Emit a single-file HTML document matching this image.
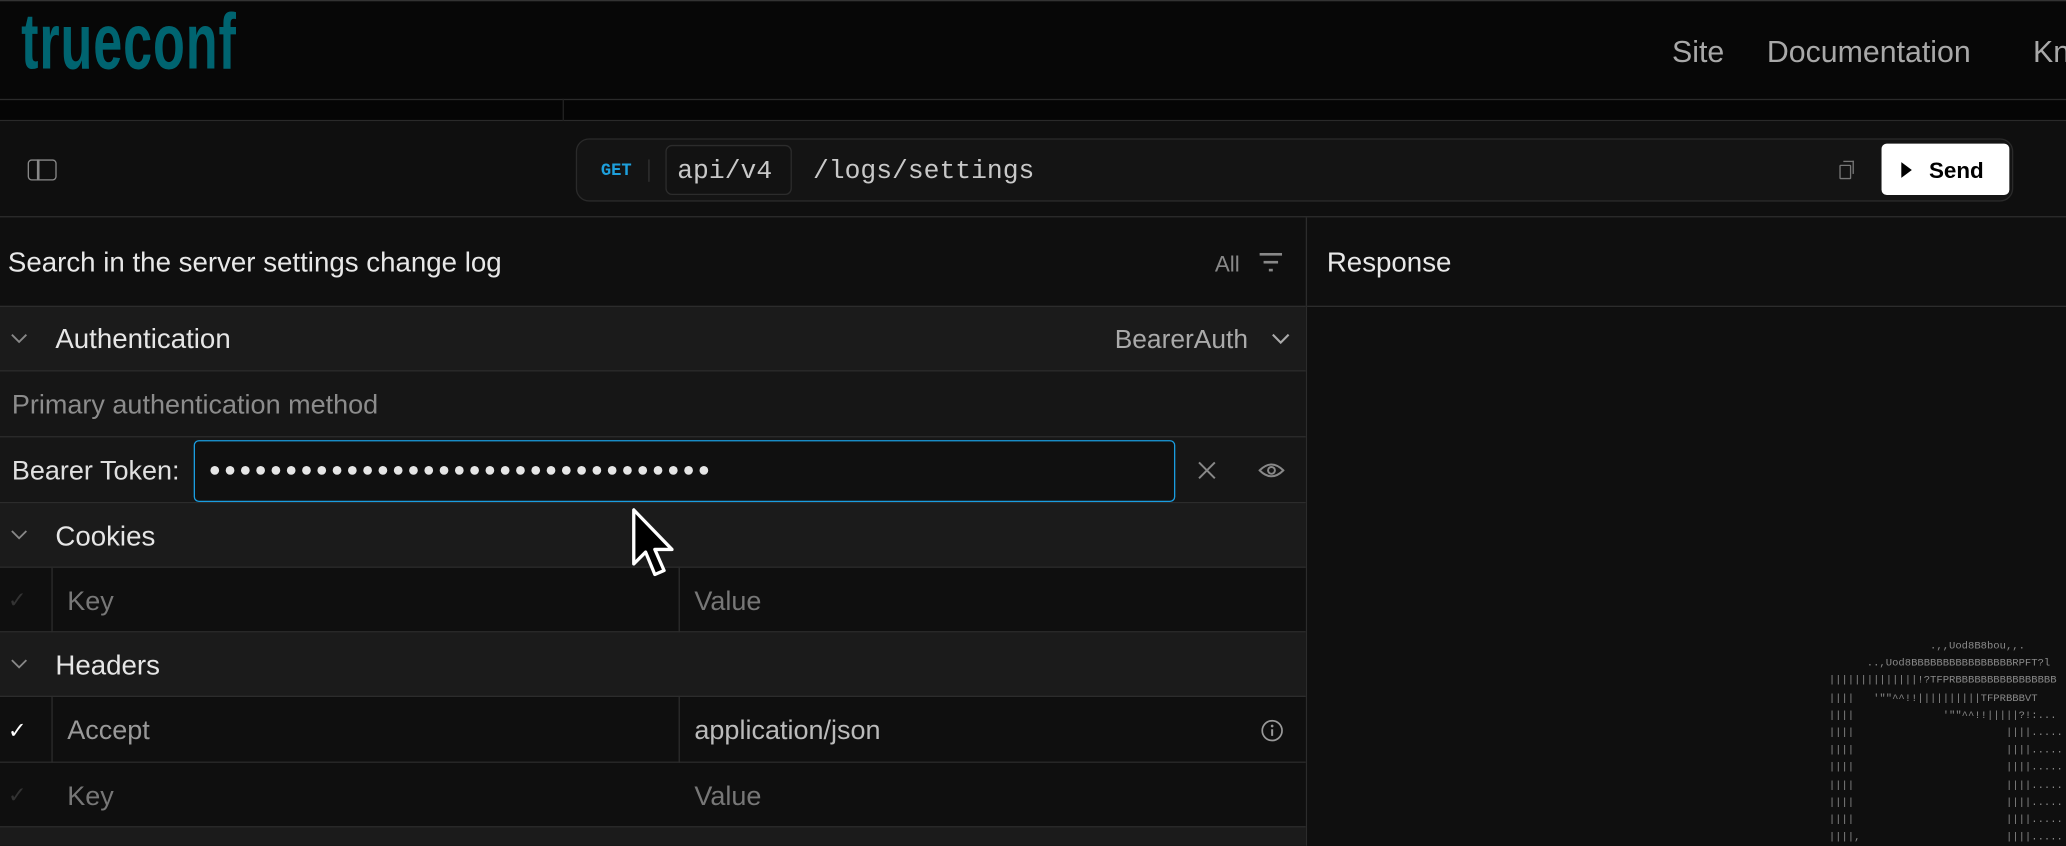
<!DOCTYPE html>
<html><head><meta charset="utf-8"><style>
html,body{margin:0;padding:0;background:#0f0f0f;overflow:hidden;width:2066px;height:846px}
#w{position:absolute;left:0;top:0;width:1568px;height:642px;transform:scale(1.317602);transform-origin:0 0;font-family:"Liberation Sans",sans-serif;color:#e6e6e6;background:#0f0f0f;overflow:hidden}
.a{position:absolute}
.hdr{left:0;top:0;width:1568px;height:75px;background:#070707;border-top:1px solid #333;box-sizing:border-box}
.row{position:absolute;left:0;width:991px;border-bottom:1px solid #2c2c2c;box-sizing:border-box}
.sec{background:#1b1b1b}
.t{position:absolute;white-space:nowrap}
.mono{font-family:"Liberation Mono",monospace}
pre{margin:0;font-family:"Liberation Mono",monospace;font-size:8px;line-height:13.2px;color:#8a8a8a}
</style></head><body><div id="w">
<div class="a hdr"></div>
<div class="t" style="left:16px;top:-3px;font-family:'Liberation Sans Narrow','Liberation Sans',sans-serif;font-weight:bold;font-size:60px;color:#006470;transform:scaleX(0.66);transform-origin:0 0;letter-spacing:1px">trueconf</div>
<div class="t" style="left:1269px;top:26px;font-size:23px;color:#a8a8a8">Site</div>
<div class="t" style="left:1341px;top:26px;font-size:23px;color:#a8a8a8">Documentation</div>
<div class="t" style="left:1543px;top:26px;font-size:23px;color:#a8a8a8">Kn</div>
<div class="a" style="left:0;top:75px;width:1568px;height:17px;background:#050505;border-top:1px solid #2a2a2a;border-bottom:1px solid #2a2a2a;box-sizing:border-box"></div>
<div class="a" style="left:427px;top:75px;width:1px;height:17px;background:#222"></div>
<!-- toolbar -->
<div class="a" style="left:0;top:92px;width:1568px;height:73px;background:#0f0f0f;border-bottom:1px solid #2c2c2c;box-sizing:border-box"></div>
<div class="a" style="left:21px;top:121px;width:22px;height:16px;border:1.5px solid #888;border-radius:3px;box-sizing:border-box"></div>
<div class="a" style="left:28px;top:121px;width:1.5px;height:16px;background:#888"></div>
<div class="a" style="left:437px;top:105px;width:1091px;height:48px;background:#141414;border:1px solid #2a2a2a;border-radius:10px;box-sizing:border-box"></div>
<div class="t mono" style="left:456px;top:122px;font-size:13px;font-weight:bold;color:#1ea0dc">GET</div>
<div class="a" style="left:492px;top:121px;width:1px;height:17px;background:#333"></div>
<div class="a" style="left:505px;top:110px;width:96px;height:38px;border:1px solid #2c2c2c;border-radius:5px;box-sizing:border-box;background:#121212"></div>
<div class="t mono" style="left:514px;top:119px;font-size:20px;color:#c8c8c8">api/v4</div>
<div class="t mono" style="left:617px;top:119px;font-size:20px;color:#c8c8c8">/logs/settings</div>
<div class="a" style="left:1396px;top:125px;width:7px;height:9px;border:1.2px solid #777;border-radius:1px"></div>
<div class="a" style="left:1399px;top:122px;width:7px;height:9px;border-top:1.2px solid #777;border-right:1.2px solid #777"></div>
<div class="a" style="left:1428px;top:109px;width:97px;height:39px;background:#fff;border-radius:4px"></div>
<svg class="a" style="left:1442px;top:123px" width="10" height="12"><path d="M1 0 L9 6 L1 12Z" fill="#000"/></svg>
<div class="t" style="left:1464px;top:120px;font-size:17px;font-weight:bold;color:#000">Send</div>
<!-- left panel -->
<div class="a" style="left:991px;top:165px;width:1px;height:477px;background:#2c2c2c"></div>
<div class="row" style="top:165px;height:68px"></div>
<div class="t" style="left:6px;top:188px;font-size:21px;color:#e8e8e8">Search in the server settings change log</div>
<div class="t" style="left:922px;top:191px;font-size:17px;color:#888">All</div>
<div class="a" style="left:956px;top:192px;width:17px;height:2px;background:#888"></div>
<div class="a" style="left:959px;top:198px;width:11px;height:2px;background:#888"></div>
<div class="a" style="left:963px;top:204px;width:3px;height:2px;background:#888"></div>
<div class="t" style="left:1007px;top:188px;font-size:21px;color:#e8e8e8">Response</div>
<div class="a" style="left:992px;top:232px;width:576px;height:1px;background:#2c2c2c"></div>

<div class="row sec" style="top:233px;height:49px"></div>
<svg class="a" style="left:8px;top:253px" width="13" height="8"><path d="M1 1 L6.5 6.5 L12 1" stroke="#888" stroke-width="1.4" fill="none"/></svg>
<div class="t" style="left:42px;top:246px;font-size:21px">Authentication</div>
<div class="t" style="left:846px;top:247px;font-size:20px;color:#aaa">BearerAuth</div>
<svg class="a" style="left:965px;top:253px" width="14" height="9"><path d="M1 1 L7 7 L13 1" stroke="#aaa" stroke-width="1.6" fill="none"/></svg>
<div class="row" style="top:282px;height:50px;background:#161616"></div>
<div class="t" style="left:9px;top:296px;font-size:20.5px;color:#8c8c8c">Primary authentication method</div>
<div class="row" style="top:332px;height:50px;background:#161616"></div>
<div class="t" style="left:9px;top:346px;font-size:20.5px;color:#e0e0e0">Bearer Token:</div>
<div class="a" style="left:147px;top:334px;width:745px;height:47px;border:1.5px solid #1a9de0;border-radius:4px;background:#101010;box-sizing:border-box"></div>
<svg class="a" style="left:158px;top:352px" width="390" height="10">
<g fill="#e6e6e6">
<circle cx="5" cy="5" r="3.3"/><circle cx="16.6" cy="5" r="3.3"/><circle cx="28.2" cy="5" r="3.3"/><circle cx="39.8" cy="5" r="3.3"/><circle cx="51.4" cy="5" r="3.3"/><circle cx="63" cy="5" r="3.3"/><circle cx="74.6" cy="5" r="3.3"/><circle cx="86.2" cy="5" r="3.3"/><circle cx="97.8" cy="5" r="3.3"/><circle cx="109.4" cy="5" r="3.3"/><circle cx="121" cy="5" r="3.3"/><circle cx="132.6" cy="5" r="3.3"/><circle cx="144.2" cy="5" r="3.3"/><circle cx="155.8" cy="5" r="3.3"/><circle cx="167.4" cy="5" r="3.3"/><circle cx="179" cy="5" r="3.3"/><circle cx="190.6" cy="5" r="3.3"/><circle cx="202.2" cy="5" r="3.3"/><circle cx="213.8" cy="5" r="3.3"/><circle cx="225.4" cy="5" r="3.3"/><circle cx="237" cy="5" r="3.3"/><circle cx="248.6" cy="5" r="3.3"/><circle cx="260.2" cy="5" r="3.3"/><circle cx="271.8" cy="5" r="3.3"/><circle cx="283.4" cy="5" r="3.3"/><circle cx="295" cy="5" r="3.3"/><circle cx="306.6" cy="5" r="3.3"/><circle cx="318.2" cy="5" r="3.3"/><circle cx="329.8" cy="5" r="3.3"/><circle cx="341.4" cy="5" r="3.3"/><circle cx="353" cy="5" r="3.3"/><circle cx="364.6" cy="5" r="3.3"/><circle cx="376.2" cy="5" r="3.3"/>
</g></svg>
<svg class="a" style="left:909px;top:350px" width="14" height="14"><path d="M1 1L13 13M13 1L1 13" stroke="#888" stroke-width="1.5"/></svg>
<svg class="a" style="left:955px;top:350px" width="20" height="14"><path d="M1 7Q10 -2 19 7Q10 16 1 7Z" stroke="#888" stroke-width="1.5" fill="none"/><circle cx="10" cy="7" r="2.6" stroke="#888" stroke-width="1.5" fill="none"/></svg>

<div class="row sec" style="top:382px;height:49px"></div>
<svg class="a" style="left:8px;top:402px" width="13" height="8"><path d="M1 1 L6.5 6.5 L12 1" stroke="#888" stroke-width="1.4" fill="none"/></svg>
<div class="t" style="left:42px;top:396px;font-size:21px">Cookies</div>
<div class="row" style="top:431px;height:49px;background:#0f0f0f"></div>
<div class="a" style="left:39px;top:431px;width:1px;height:49px;background:#2c2c2c"></div>
<div class="a" style="left:515px;top:431px;width:1px;height:49px;background:#2c2c2c"></div>
<div class="t" style="left:6px;top:446px;font-size:17px;color:#333">✓</div>
<div class="t" style="left:51px;top:445px;font-size:20.5px;color:#777">Key</div>
<div class="t" style="left:527px;top:445px;font-size:20.5px;color:#777">Value</div>

<div class="row sec" style="top:480px;height:49px"></div>
<svg class="a" style="left:8px;top:500px" width="13" height="8"><path d="M1 1 L6.5 6.5 L12 1" stroke="#888" stroke-width="1.4" fill="none"/></svg>
<div class="t" style="left:42px;top:494px;font-size:21px">Headers</div>
<div class="row" style="top:529px;height:50px;background:#0f0f0f"></div>
<div class="a" style="left:39px;top:529px;width:1px;height:99px;background:#2c2c2c"></div>
<div class="a" style="left:515px;top:529px;width:1px;height:99px;background:#2c2c2c"></div>
<div class="t" style="left:6px;top:545px;font-size:17px;color:#fff">✓</div>
<div class="t" style="left:51px;top:543px;font-size:20.5px;color:#999">Accept</div>
<div class="t" style="left:527px;top:543px;font-size:20.5px;color:#bbb">application/json</div>
<svg class="a" style="left:957px;top:546px" width="17" height="17"><circle cx="8.5" cy="8.5" r="7.5" stroke="#999" stroke-width="1.3" fill="none"/><path d="M8.5 7.5V12.5" stroke="#999" stroke-width="1.5"/><circle cx="8.5" cy="5" r="1" fill="#999"/></svg>
<div class="row" style="top:579px;height:49px;background:#0f0f0f"></div>
<div class="t" style="left:6px;top:594px;font-size:17px;color:#333">✓</div>
<div class="t" style="left:51px;top:593px;font-size:20.5px;color:#777">Key</div>
<div class="t" style="left:527px;top:593px;font-size:20.5px;color:#777">Value</div>
<div class="a" style="left:0;top:628px;width:991px;height:14px;background:#1b1b1b"></div>

<pre class="a" style="left:1388px;top:484px">                .,,Uod8B8bou,,.
      ..,Uod8BBBBBBBBBBBBBBBBRPFT?l
||||||||||||||!?TFPRBBBBBBBBBBBBBBBB
||||   '""^^!!||||||||||TFPRBBBVT
||||              '""^^!!|||||?!:...
||||                        ||||.....
||||                        ||||.....
||||                        ||||.....
||||                        ||||.....
||||                        ||||.....
||||                        ||||.....
||||,                       ||||.....
||||                        ||||.....</pre>

<svg class="a" style="left:478px;top:384px" width="42" height="64"><path d="M3 3 L3 44 L12 35 L19 52 L26 49 L19 33 L32 33 Z" fill="#000" stroke="#fff" stroke-width="2.5" stroke-linejoin="round"/></svg>
</div></body></html>
